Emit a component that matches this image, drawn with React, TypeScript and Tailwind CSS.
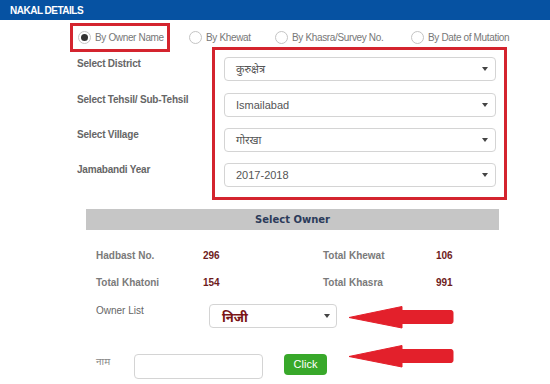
const sans = 'font-["Liberation_Sans","Noto_Sans",sans-serif]'

function Caret() {
  return (
    <svg width="6" height="4" viewBox="0 0 6 4" aria-hidden="true">
      <path d="M0 0h6L3 4z" fill="#444" />
    </svg>
  )
}

function Radio({ checked, label }: { checked?: boolean; label: string }) {
  return (
    <span className="flex items-center gap-[4px] whitespace-nowrap">
      <span className="flex h-[13px] w-[13px] shrink-0 items-center justify-center rounded-full border border-[#c4c4c4] bg-white">
        {checked && <span className="block h-[7px] w-[7px] rounded-full bg-[#333]" />}
      </span>
      <span className="text-[10px] leading-[14px] tracking-[-0.35px] text-[#777]">{label}</span>
    </span>
  )
}

function FakeSelect({ value }: { value: string }) {
  return (
    <div className="flex h-[24px] items-center justify-between rounded-[4px] border border-[#d4d4d4] bg-white pl-[11px] pr-[7px] text-[11px] text-[#555]">
      <span>{value}</span>
      <Caret />
    </div>
  )
}

function Arrow({ top }: { top: number }) {
  return (
    <svg
      className="absolute left-[348px]"
      style={{ top }}
      width="106"
      height="23"
      viewBox="0 0 106 23"
      aria-hidden="true"
    >
      <path
        d="M1 11.5 L54 0.5 L54 4.5 L103 4.5 Q105 4.5 105 6.5 L105 15.5 Q105 17.5 103 17.5 L54 17.5 L54 22 Z"
        fill="#e3202b"
        stroke="#e3202b"
        strokeLinejoin="round"
      />
    </svg>
  )
}

export default function App() {
  const labels = ['Select District', 'Select Tehsil/ Sub-Tehsil', 'Select Village', 'Jamabandi Year']
  const values = ['कुरुक्षेत्र', 'Ismailabad', 'गोरखा', '2017-2018']

  return (
    <div className={`relative h-[384px] w-[550px] overflow-hidden bg-white ${sans}`}>
      <div className="flex h-[20px] items-center bg-[#0652a2] pl-[10px] text-[10px] font-bold tracking-[-0.5px] text-white">
        NAKAL DETAILS
      </div>

      <div className="mt-[3px] flex h-[29px] items-center">
        <div className="ml-[70px] flex h-[29px] w-[100px] items-center border-[3px] border-[#d4242e] pl-[5px]">
          <Radio checked label="By Owner Name" />
        </div>
        <div className="ml-[19px] w-[86px]">
          <Radio label="By Khewat" />
        </div>
        <div className="w-[136px]">
          <Radio label="By Khasra/Survey No." />
        </div>
        <div>
          <Radio label="By Date of Mutation" />
        </div>
      </div>

      <div className="mt-[-5px] flex">
        <div className="ml-[77px] flex w-[135px] flex-col pt-[10px]">
          {labels.map((l, i) => (
            <div
              key={l}
              className={`h-[24px] text-[10px] font-bold leading-[14px] tracking-[-0.2px] text-[#666] ${i === 1 ? 'mt-[12px]' : i > 1 ? 'mt-[11px]' : ''}`}
            >
              {l}
            </div>
          ))}
        </div>
        <div className="flex w-[295px] flex-col border-[3px] border-[#d4242e] pb-[10px] pl-[9px] pr-[8px] pt-[7px]">
          {values.map((v, i) => (
            <div key={v} className={i === 1 ? 'mt-[12px]' : i > 1 ? 'mt-[11px]' : ''}>
              <FakeSelect value={v} />
            </div>
          ))}
        </div>
      </div>

      <div className="ml-[86px] mt-[9px] flex h-[21px] w-[413px] items-center justify-center bg-[#c6c6c6] font-['DejaVu_Sans',sans-serif] text-[10px] font-bold text-[#2c3b5a]">
        Select Owner
      </div>

      <div className="ml-[96px] mt-[19px] grid grid-cols-[107px_120px_113px_40px] gap-y-[13px] text-[10px] leading-[14px]">
        <span className="font-bold text-[#7a7a7a]">Hadbast No.</span>
        <span className="font-bold text-[#6e1c1c]">296</span>
        <span className="font-bold text-[#7a7a7a]">Total Khewat</span>
        <span className="font-bold text-[#6e1c1c]">106</span>
        <span className="font-bold text-[#7a7a7a]">Total Khatoni</span>
        <span className="font-bold text-[#6e1c1c]">154</span>
        <span className="font-bold text-[#7a7a7a]">Total Khasra</span>
        <span className="font-bold text-[#6e1c1c]">991</span>
      </div>

      <div className="ml-[96px] mt-[14px] flex items-start">
        <span className="w-[113px] text-[10px] leading-[14px] text-[#666]">Owner List</span>
        <div className="flex h-[24px] w-[128px] items-center justify-between rounded-[4px] border border-[#d4d4d4] bg-white pl-[12px] pr-[6px]">
          <span className="pt-[4px] text-[13px] font-bold text-[#7a1414]">निजी</span>
          <Caret />
        </div>
      </div>

      <div className="ml-[96px] mt-[26px] flex items-start">
        <span className="w-[38px] pt-[1px] text-[10px] leading-[14px] text-[#888]">नाम</span>
        <div className="h-[25px] w-[129px] rounded-[4px] border border-[#d4d4d4] bg-white" />
        <button className="ml-[21px] flex h-[21px] w-[43px] items-center justify-center rounded-[4px] bg-[#38a82a] text-[11px] text-white">
          Click
        </button>
      </div>

      <Arrow top={306} />
      <Arrow top={345} />
    </div>
  )
}
